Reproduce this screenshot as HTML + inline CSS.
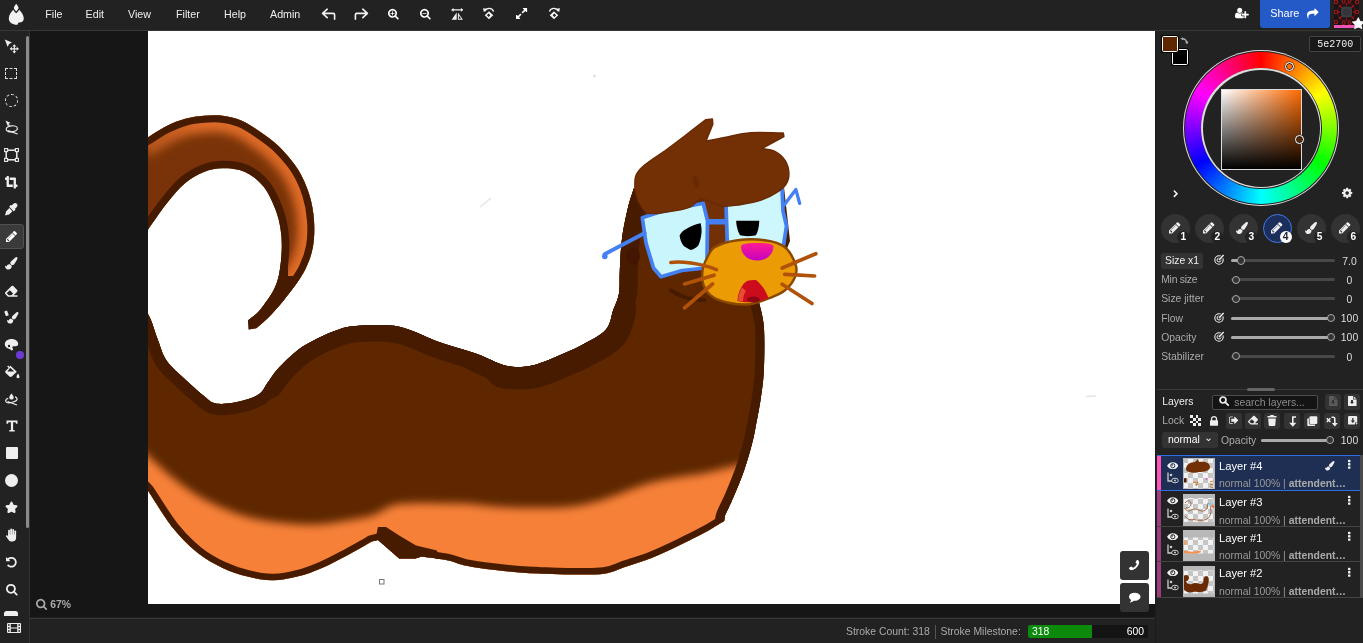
<!DOCTYPE html><html><head><meta charset="utf-8"><title>Magma</title><style>
*{box-sizing:border-box;margin:0;padding:0}
html,body{width:1363px;height:643px;overflow:hidden;background:#222;font-family:"Liberation Sans",sans-serif;font-size:10.4px;color:#aaa}
.abs{position:absolute}
#top,#tools,#status,#right,#work{will-change:transform}
#top{position:absolute;left:0;top:0;width:1363px;height:31px;background:#222;border-bottom:1px solid #383838}
.menu{position:absolute;top:8px;font-size:10.7px;color:#eee;line-height:13px;white-space:nowrap}
#tools{position:absolute;left:0;top:31px;width:30px;height:584.500px;background:#222;border-right:1px solid #333;overflow:hidden}
#work{position:absolute;left:30px;top:31px;width:1125px;height:586px;background:#161616;overflow:hidden}
#status{position:absolute;left:0;top:617px;width:1155px;height:26px;background:#222}
#right{position:absolute;left:1155px;top:31px;width:208px;height:612px;background:#222;border-left:1px solid #1b1b1b}
.t{position:absolute;white-space:nowrap;line-height:12px}
.btn{position:absolute;background:#333;border-radius:2.5px}
.track{position:absolute;height:3px;border-radius:2px;background:#484848}
.fill{position:absolute;height:3px;border-radius:2px;background:#aaa}
.thumb{position:absolute;width:8.400px;height:8.400px;border-radius:50%;background:#333;border:1px solid #aaa}
.val{position:absolute;width:30px;text-align:center;color:#ddd;font-size:10.4px;line-height:12px}
.lrow{position:absolute;left:1157px;width:203px;height:36px;border-bottom:1.600px solid #444}
.strip{position:absolute;left:0;top:0;width:4px;height:100%;background:#9c3d7d}
.thumbn{position:absolute;left:26px;top:3px;width:31.5px;height:31.5px;background:#b8b8b8;overflow:hidden}
.lname{position:absolute;left:62px;top:5px;font-size:11.2px;color:#fff;line-height:13px;white-space:nowrap}
.lsub{position:absolute;left:62px;top:22.5px;font-size:10.4px;color:#999;line-height:12px;white-space:nowrap}
.lsub b{color:#aaa}
</style></head><body>
<div id="work">
<div class="abs" style="left:118px;top:0;width:1007px;height:573px;background:#fff;overflow:hidden">
<svg style="position:absolute;left:0;top:0;width:1007px;height:574px" viewBox="148 30 1007 574">
<defs>
<filter id="b4" x="-20%" y="-20%" width="140%" height="140%"><feGaussianBlur stdDeviation="4.5"/></filter>
<filter id="b6" x="-30%" y="-30%" width="160%" height="160%"><feGaussianBlur stdDeviation="5"/></filter>
<filter id="b1" x="-20%" y="-20%" width="140%" height="140%"><feGaussianBlur stdDeviation="0.7"/></filter>
<clipPath id="cbody"><path d="M130.0 290.0C133.0 293.8 143.4 305.1 148.0 313.0C152.6 320.9 154.2 329.5 157.3 337.3C160.4 345.1 162.0 352.9 166.7 359.7C171.4 366.5 179.1 372.5 185.3 378.4C191.5 384.3 199.3 391.1 204.0 395.0C208.7 398.9 209.6 400.4 213.3 401.7C217.0 403.0 221.1 403.1 226.4 402.6C231.7 402.1 239.4 400.6 245.0 398.9C250.6 397.2 256.3 395.2 260.0 392.4C263.7 389.6 264.3 386.2 267.4 382.0C270.5 377.8 273.6 372.4 278.6 367.0C283.6 361.6 291.1 354.2 297.3 349.4C303.5 344.6 309.7 341.4 315.9 338.2C322.1 334.9 328.4 332.1 334.6 329.9C340.8 327.7 344.3 326.1 353.2 325.2C362.1 324.3 378.5 323.7 388.0 324.3C397.5 324.9 401.5 326.2 410.0 329.0C418.5 331.8 427.8 337.0 439.0 341.0C450.2 345.0 465.8 349.1 477.0 353.0C488.2 356.9 497.0 362.8 506.0 364.7C515.0 366.6 522.5 366.2 531.0 364.7C539.5 363.1 548.3 358.8 556.8 355.4C565.3 351.9 573.8 348.4 582.0 344.0C590.2 339.6 600.6 334.6 605.8 328.8C611.0 323.0 611.1 315.1 613.3 309.0C615.5 302.9 617.9 298.9 619.0 292.4C620.1 285.9 619.3 279.1 619.8 270.0C620.3 260.9 620.6 248.3 622.0 237.7C623.4 227.1 626.0 215.0 628.0 206.6C630.0 198.2 633.0 190.3 634.0 187.0L784 186 L790 240 L770 290L758.9 300.8C759.7 305.0 763.1 314.8 763.9 326.0C764.7 337.2 764.4 356.3 763.9 368.0C763.4 379.7 762.4 386.2 761.0 396.0C759.6 405.8 757.0 418.9 755.5 426.7C754.0 434.5 753.9 435.8 752.0 443.0C750.1 450.2 747.1 460.9 744.0 469.7C740.9 478.5 736.7 488.5 733.5 496.0C730.3 503.5 726.4 511.5 725.0 514.6L724.2 519.9C720.9 521.9 712.1 527.6 704.4 531.8C696.7 536.0 686.8 540.8 678.0 545.0C669.2 549.2 660.3 553.5 651.5 557.0C642.7 560.5 632.9 563.4 625.0 566.0C617.1 568.6 612.8 571.5 604.0 572.8C595.2 574.0 581.9 573.5 572.2 573.5C562.5 573.5 554.6 573.1 545.8 572.8C537.0 572.5 528.1 572.2 519.3 571.5C510.5 570.8 501.7 569.9 492.9 568.8C484.1 567.7 473.9 566.4 466.4 564.8C458.9 563.2 455.5 560.9 448.0 559.4C440.5 557.9 426.0 556.1 421.6 555.5L415.4 557.5L399.2 557.5L378 539L371.9 540.5C367.8 542.8 355.3 550.0 347.0 554.4C338.7 558.8 330.3 563.4 322.0 566.9C313.7 570.4 305.6 573.5 297.3 575.6C289.0 577.7 280.7 579.3 272.4 579.3C264.1 579.3 255.8 577.7 247.5 575.6C239.2 573.5 230.9 570.8 222.6 566.9C214.3 563.0 206.1 558.6 197.8 552.0C189.5 545.4 181.2 537.4 172.9 527.0C164.6 516.6 152.2 496.0 148.0 489.8L130 470Z"/></clipPath>
<clipPath id="ctail"><path d="M140.0 141.0C141.3 140.2 143.6 139.0 148.0 136.3C152.4 133.6 160.5 128.1 166.7 125.0C172.9 121.9 179.1 119.4 185.3 117.7C191.5 116.0 197.8 115.2 204.0 114.7C210.2 114.2 216.4 113.9 222.6 114.7C228.8 115.5 235.1 116.8 241.3 119.5C247.5 122.2 253.7 126.3 260.0 130.7C266.3 135.0 272.7 139.3 279.0 145.6C285.3 151.9 293.0 160.6 298.0 168.5C303.0 176.4 306.5 184.8 309.2 193.3C311.9 201.8 313.4 210.7 314.0 219.4C314.6 228.1 314.4 237.4 313.0 245.5C311.6 253.6 309.2 260.4 305.5 267.9C301.8 275.4 296.2 283.1 290.5 290.6C284.8 298.2 277.2 307.1 271.5 313.2C265.8 319.3 258.8 324.9 256.2 327.2L248.7 328.400L248.0 319.4C250.0 317.7 255.5 314.5 260.0 309.0C264.5 303.5 271.5 294.1 274.9 286.6C278.3 279.1 279.4 272.3 280.5 264.2C281.6 256.1 282.2 246.7 281.6 238.0C281.0 229.3 279.7 220.7 276.7 212.0C273.7 203.3 269.0 192.7 263.7 185.8C258.4 179.0 251.8 174.0 245.0 170.9C238.2 167.8 229.4 167.2 222.6 167.2C215.8 167.2 210.2 168.4 204.0 170.9C197.8 173.4 191.5 176.7 185.3 182.0C179.1 187.3 172.9 194.8 166.7 202.6C160.5 210.4 152.4 222.5 148.0 228.7C143.6 234.9 141.3 238.1 140.0 240.0Z"/></clipPath>
<linearGradient id="tg" gradientUnits="userSpaceOnUse" x1="148" y1="0" x2="320" y2="0"><stop offset="0" stop-color="#b3541b"/><stop offset=".3" stop-color="#dc6926"/><stop offset="1" stop-color="#e06c28"/></linearGradient>
<linearGradient id="nose" x1="0" y1="0" x2="0" y2="1"><stop offset="0" stop-color="#ff1c90"/><stop offset="1" stop-color="#c400c4"/></linearGradient>
</defs>
<g clip-path="url(#ctail)">
<rect x="140" y="100" width="200" height="240" fill="#7a3308"/>
<path d="M140.0 141.0C141.3 140.2 143.6 139.0 148.0 136.3C152.4 133.6 160.5 128.1 166.7 125.0C172.9 121.9 179.1 119.4 185.3 117.7C191.5 116.0 197.8 115.2 204.0 114.7C210.2 114.2 216.4 113.9 222.6 114.7C228.8 115.5 235.1 116.8 241.3 119.5C247.5 122.2 253.7 126.3 260.0 130.7C266.3 135.0 272.7 139.3 279.0 145.6C285.3 151.9 293.0 160.6 298.0 168.5C303.0 176.4 306.5 184.8 309.2 193.3C311.9 201.8 313.4 210.7 314.0 219.4C314.6 228.1 314.4 237.4 313.0 245.5C311.6 253.6 309.2 260.4 305.5 267.9C301.8 275.4 296.2 283.1 290.5 290.6C284.8 298.2 277.2 307.1 271.5 313.2C265.8 319.3 258.8 324.9 256.2 327.2" fill="none" stroke="url(#tg)" stroke-width="34" filter="url(#b6)"/>
<path d="M248.0 319.4C250.0 317.7 255.5 314.5 260.0 309.0C264.5 303.5 271.5 294.1 274.9 286.6C278.3 279.1 279.4 272.3 280.5 264.2C281.6 256.1 282.2 246.7 281.6 238.0C281.0 229.3 279.7 220.7 276.7 212.0C273.7 203.3 269.0 192.7 263.7 185.8C258.4 179.0 251.8 174.0 245.0 170.9C238.2 167.8 229.4 167.2 222.6 167.2C215.8 167.2 210.2 168.4 204.0 170.9C197.8 173.4 191.5 176.7 185.3 182.0C179.1 187.3 172.9 194.8 166.7 202.6C160.5 210.4 152.4 222.5 148.0 228.7C143.6 234.9 141.3 238.1 140.0 240.0" fill="none" stroke="#471b00" stroke-width="15"/>
<path d="M140.0 141.0C141.3 140.2 143.6 139.0 148.0 136.3C152.4 133.6 160.5 128.1 166.7 125.0C172.9 121.9 179.1 119.4 185.3 117.7C191.5 116.0 197.8 115.2 204.0 114.7C210.2 114.2 216.4 113.9 222.6 114.7C228.8 115.5 235.1 116.8 241.3 119.5C247.5 122.2 253.7 126.3 260.0 130.7C266.3 135.0 272.7 139.3 279.0 145.6C285.3 151.9 293.0 160.6 298.0 168.5C303.0 176.4 306.5 184.8 309.2 193.3C311.9 201.8 313.4 210.7 314.0 219.4C314.6 228.1 314.4 237.4 313.0 245.5C311.6 253.6 309.2 260.4 305.5 267.9C301.8 275.4 296.2 283.1 290.5 290.6C284.8 298.2 277.2 307.1 271.5 313.2C265.8 319.3 258.8 324.9 256.2 327.2" fill="none" stroke="#471b00" stroke-width="14"/>
<path d="M270 236 L288 240 L288 275 L300 275 L300 340 L230 340 L230 236 Z" fill="#471b00"/>
</g>
<g clip-path="url(#cbody)">
<rect x="130" y="180" width="650" height="420" fill="#5e2700"/>
<path d="M130.0 440.0C133.0 442.5 140.8 448.8 148.0 455.0C155.2 461.2 164.6 470.4 172.9 477.0C181.2 483.6 189.5 489.7 197.8 494.7C206.1 499.7 214.3 503.5 222.6 507.0C230.9 510.5 239.2 513.6 247.5 515.9C255.8 518.2 264.1 519.6 272.4 520.8C280.7 522.0 289.0 522.9 297.3 523.3C305.6 523.7 313.7 523.9 322.0 523.3C330.3 522.7 338.7 521.0 347.0 519.6C355.3 518.2 365.3 516.7 371.9 514.6C378.5 512.5 382.6 508.9 386.8 507.0C391.0 505.1 391.0 504.2 396.8 503.4C402.6 502.6 413.6 502.1 421.6 502.0C429.6 501.9 437.5 502.4 445.0 502.5C452.5 502.6 458.4 502.2 466.4 502.7C474.4 503.2 484.1 504.7 492.9 505.4C501.7 506.1 510.5 506.5 519.3 506.7C528.1 506.9 537.0 506.9 545.8 506.7C554.6 506.5 563.4 506.5 572.2 505.4C581.0 504.3 589.9 502.4 598.7 500.0C607.5 497.6 616.2 493.9 625.0 490.8C633.8 487.7 642.7 484.0 651.5 481.6C660.3 479.2 669.2 477.9 678.0 476.3C686.8 474.8 695.6 474.1 704.4 472.3C713.2 470.5 721.6 467.8 730.9 465.7C740.2 463.6 755.1 460.9 760.0 460.0L760 600L130 600Z" fill="#f68038" filter="url(#b4)"/>
<path d="M130.0 290.0C133.0 293.8 143.4 305.1 148.0 313.0C152.6 320.9 154.2 329.5 157.3 337.3C160.4 345.1 162.0 352.9 166.7 359.7C171.4 366.5 179.1 372.5 185.3 378.4C191.5 384.3 199.3 391.1 204.0 395.0C208.7 398.9 209.6 400.4 213.3 401.7C217.0 403.0 221.1 403.1 226.4 402.6C231.7 402.1 239.4 400.6 245.0 398.9C250.6 397.2 256.3 395.2 260.0 392.4C263.7 389.6 264.3 386.2 267.4 382.0C270.5 377.8 273.6 372.4 278.6 367.0C283.6 361.6 291.1 354.2 297.3 349.4C303.5 344.6 309.7 341.4 315.9 338.2C322.1 334.9 328.4 332.1 334.6 329.9C340.8 327.7 344.3 326.1 353.2 325.2C362.1 324.3 378.5 323.7 388.0 324.3C397.5 324.9 401.5 326.2 410.0 329.0C418.5 331.8 427.8 337.0 439.0 341.0C450.2 345.0 465.8 349.1 477.0 353.0C488.2 356.9 497.0 362.8 506.0 364.7C515.0 366.6 522.5 366.2 531.0 364.7C539.5 363.1 548.3 358.8 556.8 355.4C565.3 351.9 573.8 348.4 582.0 344.0C590.2 339.6 600.6 334.6 605.8 328.8C611.0 323.0 611.1 315.1 613.3 309.0C615.5 302.9 617.9 298.9 619.0 292.4C620.1 285.9 619.3 279.1 619.8 270.0C620.3 260.9 620.6 248.3 622.0 237.7C623.4 227.1 626.0 215.0 628.0 206.6C630.0 198.2 633.0 190.3 634.0 187.0L784 186 L790 240 L770 290L758.9 300.8C759.7 305.0 763.1 314.8 763.9 326.0C764.7 337.2 764.4 356.3 763.9 368.0C763.4 379.7 762.4 386.2 761.0 396.0C759.6 405.8 757.0 418.9 755.5 426.7C754.0 434.5 753.9 435.8 752.0 443.0C750.1 450.2 747.1 460.9 744.0 469.7C740.9 478.5 736.7 488.5 733.5 496.0C730.3 503.5 726.4 511.5 725.0 514.6L724.2 519.9C720.9 521.9 712.1 527.6 704.4 531.8C696.7 536.0 686.8 540.8 678.0 545.0C669.2 549.2 660.3 553.5 651.5 557.0C642.7 560.5 632.9 563.4 625.0 566.0C617.1 568.6 612.8 571.5 604.0 572.8C595.2 574.0 581.9 573.5 572.2 573.5C562.5 573.5 554.6 573.1 545.8 572.8C537.0 572.5 528.1 572.2 519.3 571.5C510.5 570.8 501.7 569.9 492.9 568.8C484.1 567.7 473.9 566.4 466.4 564.8C458.9 563.2 455.5 560.9 448.0 559.4C440.5 557.9 426.0 556.1 421.6 555.5L415.4 557.5L399.2 557.5L378 539L371.9 540.5C367.8 542.8 355.3 550.0 347.0 554.4C338.7 558.8 330.3 563.4 322.0 566.9C313.7 570.4 305.6 573.5 297.3 575.6C289.0 577.7 280.7 579.3 272.4 579.3C264.1 579.3 255.8 577.7 247.5 575.6C239.2 573.5 230.9 570.8 222.6 566.9C214.3 563.0 206.1 558.6 197.8 552.0C189.5 545.4 181.2 537.4 172.9 527.0C164.6 516.6 152.2 496.0 148.0 489.8L130 470Z" fill="none" stroke="#471b00" stroke-width="13" stroke-linejoin="round"/>
<path d="M148.0 313.0C149.6 317.1 154.2 329.5 157.3 337.3C160.4 345.1 162.0 352.9 166.7 359.7C171.4 366.5 179.1 372.5 185.3 378.4C191.5 384.3 199.3 391.1 204.0 395.0C208.7 398.9 209.6 400.4 213.3 401.7C217.0 403.0 221.1 403.1 226.4 402.6C231.7 402.1 239.4 400.6 245.0 398.9C250.6 397.2 256.3 395.2 260.0 392.4C263.7 389.6 264.3 386.2 267.4 382.0C270.5 377.8 273.6 372.4 278.6 367.0C283.6 361.6 291.1 354.2 297.3 349.4C303.5 344.6 309.7 341.4 315.9 338.2C322.1 334.9 328.4 332.1 334.6 329.9C340.8 327.7 344.3 326.1 353.2 325.2C362.1 324.3 378.5 323.7 388.0 324.3C397.5 324.9 401.5 326.2 410.0 329.0C418.5 331.8 427.8 337.0 439.0 341.0C450.2 345.0 465.8 349.1 477.0 353.0C488.2 356.9 497.0 362.8 506.0 364.7C515.0 366.6 522.5 366.2 531.0 364.7C539.5 363.1 548.3 358.8 556.8 355.4C565.3 351.9 573.8 348.4 582.0 344.0C590.2 339.6 600.6 334.6 605.8 328.8C611.0 323.0 611.1 315.1 613.3 309.0C615.5 302.9 617.9 298.9 619.0 292.4C620.1 285.9 619.3 279.1 619.8 270.0C620.3 260.9 620.6 248.3 622.0 237.7C623.4 227.1 626.0 215.0 628.0 206.6C630.0 198.2 633.0 190.3 634.0 187.0" fill="none" stroke="#471b00" stroke-width="23" stroke-linejoin="round"/>
<path d="M267.4 382.0C269.3 379.5 273.6 372.4 278.6 367.0C283.6 361.6 291.1 354.2 297.3 349.4C303.5 344.6 309.7 341.4 315.9 338.2C322.1 334.9 328.4 332.1 334.6 329.9C340.8 327.7 344.3 326.1 353.2 325.2C362.1 324.3 378.5 323.7 388.0 324.3C397.5 324.9 401.5 326.2 410.0 329.0C418.5 331.8 427.8 337.0 439.0 341.0C450.2 345.0 470.7 351.0 477.0 353.0" fill="none" stroke="#471b00" stroke-width="33" stroke-linecap="round"/>
<path d="M477.0 353.0C481.8 354.9 497.0 362.8 506.0 364.7C515.0 366.6 522.5 366.2 531.0 364.7C539.5 363.1 548.3 358.8 556.8 355.4C565.3 351.9 573.8 348.4 582.0 344.0C590.2 339.6 600.6 334.6 605.8 328.8C611.0 323.0 611.1 315.1 613.3 309.0C615.5 302.9 617.9 298.9 619.0 292.4C620.1 285.9 619.3 279.1 619.8 270.0C620.3 260.9 620.6 248.3 622.0 237.7C623.4 227.1 626.0 215.0 628.0 206.6C630.0 198.2 633.0 190.3 634.0 187.0" fill="none" stroke="#471b00" stroke-width="36" stroke-linecap="round"/>
<path d="M506.0 364.7C510.2 364.7 522.5 366.2 531.0 364.7C539.5 363.1 548.3 358.8 556.8 355.4C565.3 351.9 573.8 348.4 582.0 344.0C590.2 339.6 600.6 334.6 605.8 328.8C611.0 323.0 612.0 312.3 613.3 309.0" fill="none" stroke="#471b00" stroke-width="46" stroke-linecap="round"/>
<ellipse cx="633" cy="255" rx="7" ry="9" fill="#421800" filter="url(#b1)"/>
<path d="M757.0 296.0C757.3 296.8 757.8 295.8 758.9 300.8C760.0 305.8 763.1 314.8 763.9 326.0C764.7 337.2 764.4 356.3 763.9 368.0C763.4 379.7 762.4 386.2 761.0 396.0C759.6 405.8 757.0 418.9 755.5 426.7C754.0 434.5 753.9 435.8 752.0 443.0C750.1 450.2 747.1 460.9 744.0 469.7C740.9 478.5 736.7 488.5 733.5 496.0C730.3 503.5 726.5 510.6 725.0 514.6C723.5 518.6 724.3 519.0 724.2 519.9" fill="none" stroke="#471b00" stroke-width="18"/>
<path d="M378 526 L386 526 L400 535 L416 544.5 L437 549.5 L440 562 L399 562 L375 540 Z" fill="#471b00"/>
</g>
<path d="M704 196 L728 200 L728 252 L704 262 Z" fill="#743005"/>
<path d="M642.3 216.7 L659.7 211 L703.2 202.3 L707.5 219.7 L707 257 L705.7 267 L682 269.5 L661 275.7 L653.5 267 L646 242 Z" fill="#c8f6fc" stroke="#4480f2" stroke-width="3.7" stroke-linejoin="round"/>
<path d="M726 203 L782 186 L783 210 L786.5 225 L783.4 245 L727.4 245 Z" fill="#cdf7fc" stroke="#4480f2" stroke-width="3.7" stroke-linejoin="round"/>
<path d="M706 218 L727 218 L727 223.5 L706 223.5 Z" fill="#4480f2"/>
<path d="M644.8 232 L604.5 253.3" fill="none" stroke="#4480f2" stroke-width="3.8" stroke-linecap="round"/><circle cx="604.8" cy="255.5" r="2.8" fill="#4480f2"/>
<path d="M783.4 205 L795.9 188.6 L799.6 202.3" fill="none" stroke="#4480f2" stroke-width="3.3" stroke-linecap="round" stroke-linejoin="round"/>
<path d="M634.9 187.7C635.1 185.5 634.3 178.6 635.9 174.7C637.5 170.8 639.2 168.8 644.3 164.4C649.4 160.0 659.9 153.5 666.7 148.5C673.5 143.5 678.8 139.5 685.3 134.5C691.8 129.5 702.5 121.3 705.9 118.7L712.4 118.1L712.8 123.3L705.9 140.1L705.9 140.1C709.0 139.5 717.0 137.8 724.5 136.4C732.0 135.0 740.8 132.4 750.6 131.7C760.4 131.0 777.8 132.0 783.3 132.1L783.9 135.5L761.8 147.6L761.8 147.6C764.0 148.1 771.0 148.4 774.9 150.4C778.8 152.4 782.9 156.0 785.2 159.7C787.5 163.4 788.8 168.9 788.9 172.8C789.0 176.7 788.1 179.9 786.1 183.0C784.1 186.1 780.8 188.8 776.8 191.5C772.8 194.2 767.7 196.9 761.8 198.9C755.9 200.9 747.8 202.5 741.3 203.6C734.8 204.7 725.7 205.2 722.6 205.5L700.2 197L700.2 197.0C698.3 198.6 694.6 204.1 689.0 206.4C683.4 208.7 673.5 210.1 666.7 211.0C659.9 211.9 652.7 213.7 648.0 212.0C643.3 210.3 640.9 204.9 638.7 200.8C636.5 196.8 635.5 189.9 634.9 187.7Z" fill="#743005" stroke="#6a2a03" stroke-width="1.5" stroke-linejoin="round"/>
<ellipse cx="696" cy="181" rx="3" ry="6" fill="#692903" transform="rotate(-15 696 181)"/>
<path d="M700.7 222.2 C701.5 226 701.8 229 701.5 232 C701 237 700 241 698.3 244.6 C696 247 693 249 690.8 249 C688 248 685 246 683.3 244.6 C681 241 680 238 679.6 234.6 C681 231 684 229 687 227.4 C691 225 696 223 700.7 222.2 Z" fill="#000"/>
<path d="M736.1 219.8 L759.3 219.8 C759 226 758 231 756 234 C754 235.5 742 235.5 739.9 234 C738 231 736.5 226 736.1 219.8 Z" fill="#000"/>
<path d="M670.9 289.4 C680 296 692 299 704.5 299.3" fill="none" stroke="#471b00" stroke-width="4" stroke-linecap="round"/>
<path d="M707.0 257.0C709.1 253.1 709.9 249.0 715.0 246.0C720.1 243.0 729.1 240.3 737.4 239.2C745.7 238.1 756.9 238.1 764.8 239.2C772.7 240.3 779.5 241.8 784.7 246.0C789.9 250.2 794.2 259.4 795.9 264.6C797.5 269.8 796.5 272.9 794.6 277.0C792.7 281.1 788.9 286.2 784.7 289.5C780.6 292.8 775.5 294.7 769.7 297.0C763.9 299.3 756.4 302.4 749.8 303.2C743.2 304.0 736.1 303.2 729.9 302.0C723.7 300.8 716.9 298.6 712.5 295.7C708.1 292.8 705.4 288.9 703.7 284.5C702.0 280.1 702.0 274.2 702.5 269.6C703.0 265.0 704.9 260.9 707.0 257.0Z" fill="#eb9c05" stroke="#8a4800" stroke-width="2.4"/>
<path d="M741 246 C741 243 745 242 757 242 C769 242 773.5 243 773.5 246 C773 254 766 259.6 757.3 259.6 C748 259.6 741.5 254 741 246 Z" fill="url(#nose)"/>
<path d="M737.4 300 C738 294 739 290 741 287 C743 283 746 280 748.6 279.5 C751 278.8 754 278.8 756 279 C759 281 761 284 763.5 287 C765.5 290 767 293 768.5 297 C760 301 748 302.5 737.4 300 Z" fill="#cc0c1c"/>
<path d="M738 299.8 C738.5 294 740 290 742 286.5 L746 290 C744 293 743 296 743 300.5 Z" fill="#e8603a" opacity=".8"/>
<ellipse cx="753.5" cy="298.5" rx="6.5" ry="3" fill="#8c0618"/>
<g fill="none" stroke="#b0520a" stroke-width="3.7" stroke-linecap="round"><path d="M670.9 261.5 C680 260 700 262 716.5 268.6"/><path d="M684.6 283 L714 274.2"/><path d="M684.6 306.8 L712.5 283"/><path d="M782.2 267 L815.8 252.7"/><path d="M784.7 273.3 L814.6 275"/><path d="M782.2 283.3 L812 302.5"/></g>
<rect x="379.5" y="578.5" width="4.5" height="4.5" fill="none" stroke="#777" stroke-width="1"/>
<path d="M480 206 L491 197" stroke="#e8e4e0" stroke-width="1.5"/><path d="M1086 395.5 L1096 395" stroke="#e4e4e4" stroke-width="1.5"/><circle cx="594.5" cy="75" r="1.5" fill="#e6e0dc"/>
</svg>
</div>
<svg style="position:absolute;left:6.13px;top:566.60px;width:11.14px;height:12.00px;fill:#aaa;overflow:visible;" viewBox="0 -1536 1664 1792"><path transform="scale(1,-1)" d="M1152 704q0 185 -131.5 316.5t-316.5 131.5t-316.5 -131.5t-131.5 -316.5t131.5 -316.5t316.5 -131.5t316.5 131.5t131.5 316.5zM1664 -128q0 -52 -38 -90t-90 -38q-54 0 -90 38l-343 342q-179 -124 -399 -124q-143 0 -273.5 55.5t-225 150t-150 225t-55.5 273.5 t55.5 273.5t150 225t225 150t273.5 55.5t273.5 -55.5t225 -150t150 -225t55.5 -273.5q0 -220 -124 -399l343 -343q37 -37 37 -90z"/></svg>
<div class="t" style="left:20.200px;top:568px;color:#aaa;font-size:10.400px;font-weight:bold">67%</div>
<div class="btn" style="left:1090px;top:520px;width:29px;height:29px;border-radius:3px"></div>
<svg style="position:absolute;left:1099.39px;top:528.00px;width:10.21px;height:13.00px;fill:#fff;overflow:visible;" viewBox="0 -1536 1408 1792"><path transform="translate(1408,0) scale(-1,-1)" d="M1408 296q0 -27 -10 -70.5t-21 -68.5q-21 -50 -122 -106q-94 -51 -186 -51q-27 0 -53 3.5t-57.5 12.5t-47 14.5t-55.5 20.5t-49 18q-98 35 -175 83q-127 79 -264 216t-216 264q-48 77 -83 175q-3 9 -18 49t-20.5 55.5t-14.5 47t-12.5 57.5t-3.5 53q0 92 51 186 q56 101 106 122q25 11 68.5 21t70.5 10q14 0 21 -3q18 -6 53 -76q11 -19 30 -54t35 -63.5t31 -53.5q3 -4 17.5 -25t21.5 -35.5t7 -28.5q0 -20 -28.5 -50t-62 -55t-62 -53t-28.5 -46q0 -9 5 -22.5t8.5 -20.5t14 -24t11.5 -19q76 -137 174 -235t235 -174q2 -1 19 -11.5t24 -14 t20.5 -8.5t22.5 -5q18 0 46 28.5t53 62t55 62t50 28.5q14 0 28.5 -7t35.5 -21.5t25 -17.5q25 -15 53.5 -31t63.5 -35t54 -30q70 -35 76 -53q3 -7 3 -21z"/></svg>
<div class="btn" style="left:1090px;top:552px;width:29px;height:29px;border-radius:3px"></div>
<svg style="position:absolute;left:1098.75px;top:559.75px;width:11.50px;height:11.50px;fill:#fff;overflow:visible;" viewBox="0 -1536 1792 1792"><path transform="scale(1,-1)" d="M1792 640q0 -174 -120 -321.5t-326 -233t-450 -85.5q-70 0 -145 8q-198 -175 -460 -242q-49 -14 -114 -22q-17 -2 -30.5 9t-17.5 29v1q-3 4 -0.5 12t2 10t4.5 9.5l6 9t7 8.5t8 9q7 8 31 34.5t34.5 38t31 39.5t32.5 51t27 59t26 76q-157 89 -247.5 220t-90.5 281 q0 130 71 248.5t191 204.5t286 136.5t348 50.5q244 0 450 -85.5t326 -233t120 -321.5z"/></svg>
</div>
<div id="top">
<svg class="abs" style="left:8px;top:3px;width:17px;height:23px" viewBox="0 0 17 23"><path fill="#f2f2f2" d="M8.2 0.8 C9.2 2.2 10.2 3.6 10.6 4.9 C10.2 6.3 9.2 7.3 8.2 8.3 C7.2 7.3 6.2 6.3 5.8 4.9 C6.2 3.6 7.2 2.2 8.2 0.8 Z M5.2 6.8 C6 8.2 7 9.3 8.2 10.2 C9.4 9.3 10.4 8.2 11.2 6.8 C13.6 9.2 15.8 12.4 15.8 15.6 C15.8 18.4 13.8 19.6 11.6 19.6 C10.4 19.6 9.6 20.2 10 21.6 C5.8 22.2 0.8 19.8 0.8 15.4 C0.8 12.2 3 9.2 5.2 6.8 Z"/></svg>
<div class="menu" style="left:45.3px">File</div>
<div class="menu" style="left:85.6px">Edit</div>
<div class="menu" style="left:128px">View</div>
<div class="menu" style="left:176px">Filter</div>
<div class="menu" style="left:224px">Help</div>
<div class="menu" style="left:270px">Admin</div>
<svg class="abs" style="left:321px;top:6.5px;width:16px;height:14px" viewBox="0 0 16 14"><path fill="none" stroke="#f2f2f2" stroke-width="1.6" stroke-linecap="round" stroke-linejoin="round" d="M6.200 2.200L1.600 6.400l4.600 4.200M1.800 6.400h10.400q1.400 0 1.400 1.400v4.400"/></svg>
<svg class="abs" style="left:353px;top:6.5px;width:16px;height:14px" viewBox="0 0 16 14"><path fill="none" stroke="#f2f2f2" stroke-width="1.6" stroke-linecap="round" stroke-linejoin="round" d="M9.800 2.200l4.600 4.200-4.600 4.200M14.200 6.400H3.800q-1.400 0-1.400 1.400v4.400"/></svg>
<svg style="position:absolute;left:387.66px;top:7.75px;width:10.68px;height:11.50px;fill:#fff;overflow:visible;" viewBox="0 -1536 1664 1792"><path transform="scale(1,-1)" d="M1024 736v-64q0 -13 -9.5 -22.5t-22.5 -9.5h-224v-224q0 -13 -9.5 -22.5t-22.5 -9.5h-64q-13 0 -22.5 9.5t-9.5 22.5v224h-224q-13 0 -22.5 9.5t-9.5 22.5v64q0 13 9.5 22.5t22.5 9.5h224v224q0 13 9.5 22.5t22.5 9.5h64q13 0 22.5 -9.5t9.5 -22.5v-224h224 q13 0 22.5 -9.5t9.5 -22.5zM1152 704q0 185 -131.5 316.5t-316.5 131.5t-316.5 -131.5t-131.5 -316.5t131.5 -316.5t316.5 -131.5t316.5 131.5t131.5 316.5zM1664 -128q0 -53 -37.5 -90.5t-90.5 -37.5q-54 0 -90 38l-343 342q-179 -124 -399 -124q-143 0 -273.5 55.5 t-225 150t-150 225t-55.5 273.5t55.5 273.5t150 225t225 150t273.5 55.5t273.5 -55.5t225 -150t150 -225t55.5 -273.5q0 -220 -124 -399l343 -343q37 -37 37 -90z"/></svg>
<svg style="position:absolute;left:419.66px;top:7.75px;width:10.68px;height:11.50px;fill:#fff;overflow:visible;" viewBox="0 -1536 1664 1792"><path transform="scale(1,-1)" d="M1024 736v-64q0 -13 -9.5 -22.5t-22.5 -9.5h-576q-13 0 -22.5 9.5t-9.5 22.5v64q0 13 9.5 22.5t22.5 9.5h576q13 0 22.5 -9.5t9.5 -22.5zM1152 704q0 185 -131.5 316.5t-316.5 131.5t-316.5 -131.5t-131.5 -316.5t131.5 -316.5t316.5 -131.5t316.5 131.5t131.5 316.5z M1664 -128q0 -53 -37.5 -90.5t-90.5 -37.5q-54 0 -90 38l-343 342q-179 -124 -399 -124q-143 0 -273.5 55.5t-225 150t-150 225t-55.5 273.5t55.5 273.5t150 225t225 150t273.5 55.5t273.5 -55.5t225 -150t150 -225t55.5 -273.5q0 -220 -124 -399l343 -343q37 -37 37 -90z "/></svg>
<svg style="position:absolute;left:515.63px;top:7.10px;width:11.14px;height:13.00px;fill:#fff;overflow:visible;" viewBox="0 -1536 1536 1792"><path transform="scale(1,-1)" d="M755 480q0 -13 -10 -23l-332 -332l144 -144q19 -19 19 -45t-19 -45t-45 -19h-448q-26 0 -45 19t-19 45v448q0 26 19 45t45 19t45 -19l144 -144l332 332q10 10 23 10t23 -10l114 -114q10 -10 10 -23zM1536 1344v-448q0 -26 -19 -45t-45 -19t-45 19l-144 144l-332 -332 q-10 -10 -23 -10t-23 10l-114 114q-10 10 -10 23t10 23l332 332l-144 144q-19 19 -19 45t19 45t45 19h448q26 0 45 -19t19 -45z"/></svg>
<svg class="abs" style="left:450.5px;top:7.5px;width:12.5px;height:12px" viewBox="0 0 12.5 12"><path fill="#f2f2f2" d="M2.600 0L0 1.900l2.600 1.900V2.500h7.300v1.300l2.600-1.900L9.900 0v1.300H2.600zM5.700 4.600V11.800H.6zM6.900 4.600l5 7.200h-5zM7.900 7.600v3.200h2.200z" fill-rule="evenodd"/></svg>
<svg class="abs" style="left:483.3px;top:7.300px;width:12px;height:12.500px" viewBox="0 0 12 12.5"><g><path fill="none" stroke="#f2f2f2" stroke-width="1.300" d="M1.800 4.300A4.700 4.700 0 0 1 10.600 4.600"/><path fill="#f2f2f2" d="M0 1.300l3.700 .5L.9 5.300z"/><path fill="#f2f2f2" fill-rule="evenodd" d="M6 4.300l4.300 4L6 12.300 1.700 8.300zM5.600 6.600L3.900 8.300l1.700 1.600 1.700-1.600z"/></g></svg>
<svg class="abs" style="left:547.7px;top:7.300px;width:12px;height:12.500px" viewBox="0 0 12 12.5"><g transform="translate(12,0) scale(-1,1)"><path fill="none" stroke="#f2f2f2" stroke-width="1.300" d="M1.800 4.300A4.700 4.700 0 0 1 10.600 4.600"/><path fill="#f2f2f2" d="M0 1.300l3.700 .5L.9 5.300z"/><path fill="#f2f2f2" fill-rule="evenodd" d="M6 4.300l4.300 4L6 12.300 1.700 8.300zM5.600 6.600L3.900 8.300l1.700 1.600 1.700-1.600z"/></g></svg>
<svg style="position:absolute;left:1234.94px;top:7.30px;width:13.71px;height:12.00px;fill:#fff;overflow:visible;" viewBox="0 -1536 2048 1792"><path transform="scale(1,-1)" d="M704 640q-159 0 -271.5 112.5t-112.5 271.5t112.5 271.5t271.5 112.5t271.5 -112.5t112.5 -271.5t-112.5 -271.5t-271.5 -112.5zM1664 512h352q13 0 22.5 -9.5t9.5 -22.5v-192q0 -13 -9.5 -22.5t-22.5 -9.5h-352v-352q0 -13 -9.5 -22.5t-22.5 -9.5h-192q-13 0 -22.5 9.5 t-9.5 22.5v352h-352q-13 0 -22.5 9.5t-9.5 22.5v192q0 13 9.5 22.5t22.5 9.5h352v352q0 13 9.5 22.5t22.5 9.5h192q13 0 22.5 -9.5t9.5 -22.5v-352zM928 288q0 -52 38 -90t90 -38h256v-238q-68 -50 -171 -50h-874q-121 0 -194 69t-73 190q0 53 3.5 103.5t14 109t26.5 108.5 t43 97.5t62 81t85.5 53.5t111.5 20q19 0 39 -17q79 -61 154.5 -91.5t164.5 -30.5t164.5 30.5t154.5 91.5q20 17 39 17q132 0 217 -96h-223q-52 0 -90 -38t-38 -90v-192z"/></svg>
<div class="abs" style="left:1260px;top:0;width:70px;height:28px;background:#2459c8;border-radius:0 0 3px 3px"></div>
<div class="menu" style="left:1270.300px;top:7.200px;color:#fff;font-size:10.900px">Share</div>
<svg style="position:absolute;left:1307.25px;top:8.25px;width:11.50px;height:11.50px;fill:#fff;overflow:visible;" viewBox="0 -1536 1792 1792"><path transform="scale(1,-1)" d="M1792 896q0 -26 -19 -45l-512 -512q-19 -19 -45 -19t-45 19t-19 45v256h-224q-98 0 -175.5 -6t-154 -21.5t-133 -42.5t-105.5 -69.5t-80 -101t-48.5 -138.5t-17.5 -181q0 -55 5 -123q0 -6 2.5 -23.5t2.5 -26.5q0 -15 -8.5 -25t-23.5 -10q-16 0 -28 17q-7 9 -13 22 t-13.5 30t-10.5 24q-127 285 -127 451q0 199 53 333q162 403 875 403h224v256q0 26 19 45t45 19t45 -19l512 -512q19 -19 19 -45z"/></svg>
<div class="abs" style="left:1334px;top:0;width:25px;height:25px;background:#1b1315;overflow:hidden"><svg width="25" height="25" viewBox="0 0 25 25"><g fill="none" stroke="#a31616" stroke-width="1.100"><circle cx="2" cy="2" r="1.700"/><circle cx="23" cy="2" r="1.700"/><circle cx="2" cy="12" r="1.700"/><circle cx="23" cy="12" r="1.700"/><circle cx="2" cy="22" r="1.700"/><circle cx="23" cy="22" r="1.700"/><circle cx="9.500" cy="1" r="1.500"/><circle cx="15.500" cy="1" r="1.500"/><circle cx="9.500" cy="23" r="1.500"/><circle cx="15.500" cy="23" r="1.500"/><path d="M5 5l3 3M20 5l-3 3M5 19l3-3M20 19l-3-3M12.500 3.500v2M4 12h2M21 12h-2M12.500 20.500v-2" stroke-width="1.400"/><circle cx="12.500" cy="12" r="9" stroke-width=".8" opacity=".7"/></g><rect x="7" y="6.500" width="11" height="11" rx="3.500" fill="#3b3b40"/><rect x="9.300" y="8.800" width="6.400" height="6.400" rx="1.800" fill="#333338"/></svg></div>
<div class="abs" style="left:1334px;top:25px;width:25px;height:3px;background:#f254b4"></div>
<svg style="position:absolute;left:1352.03px;top:17.05px;width:12.54px;height:13.50px;fill:#fff;overflow:visible;" viewBox="0 -1536 1664 1792"><path transform="scale(1,-1)" d="M1664 889q0 -22 -26 -48l-363 -354l86 -500q1 -7 1 -20q0 -21 -10.5 -35.5t-30.5 -14.5q-19 0 -40 12l-449 236l-449 -236q-22 -12 -40 -12q-21 0 -31.5 14.5t-10.5 35.5q0 6 2 20l86 500l-364 354q-25 27 -25 48q0 37 56 46l502 73l225 455q19 41 49 41t49 -41l225 -455 l502 -73q56 -9 56 -46z"/></svg>
</div>
<div id="tools">
<div class="abs" style="left:-1px;top:193px;width:25px;height:25px;background:#3a3a3a;border:1px solid #505050;border-radius:0 3px 3px 0"></div>
<div class="abs" style="left:26px;top:5px;width:3px;height:492px;background:#8a8a8a;border-radius:2px"></div>
<svg class="abs" style="left:4px;top:7.5px;width:15px;height:15px" viewBox="0 0 15 15"><path fill="#eee" d="M.8.6l7.2 3-3 1.3-1.3 3zM10.3 5.2l2 2.2h-1.4v1.8h1.8V7.8l2.2 2-2.2 2v-1.4h-1.8v1.8h1.4l-2 2.2-2-2.2h1.4v-1.8H7.9v1.4l-2.2-2 2.2-2v1.4h1.8V7.4H8.3z"/></svg>
<div class="abs" style="left:5px;top:36.650px;width:12px;height:11px;border:1.3px dashed #ddd"></div>
<div class="abs" style="left:5px;top:63.3px;width:12.5px;height:12.5px;border:1.3px dashed #ddd;border-radius:50%"></div>
<svg class="abs" style="left:4px;top:88.949px;width:15px;height:15px" viewBox="0 0 15 15"><path fill="#eee" d="M1.500 .6l5.200 2.300-2.200.9-.8 2.300z"/><ellipse cx="7.800" cy="8.800" rx="5.600" ry="3" transform="rotate(-6 7.800 8.800)" fill="none" stroke="#eee" stroke-width="1.200"/><path fill="none" stroke="#eee" stroke-width="1.200" d="M4.200 4.200l1.300 2M4 10.600l9.600 3.400"/></svg>
<svg class="abs" style="left:4px;top:116.6px;width:15px;height:14px" viewBox="0 0 15 14"><rect x="2.2" y="2.2" width="10.6" height="9.600" fill="none" stroke="#eee" stroke-width="1.500"/><g fill="#222" stroke="#eee" stroke-width="1.100"><rect x=".6" y=".6" width="3" height="3"/><rect x="11.400" y=".6" width="3" height="3"/><rect x=".6" y="10.400" width="3" height="3"/><rect x="11.400" y="10.400" width="3" height="3"/></g></svg>
<svg style="position:absolute;left:5.25px;top:144.50px;width:12.50px;height:12.50px;fill:#eee;overflow:visible" viewBox="0 0 512 512"><path d="M488 352h-40V96c0-17.67-14.33-32-32-32H192v96h160v328c0 13.250 10.750 24 24 24h48c13.250 0 24-10.750 24-24v-40h40c13.250 0 24-10.750 24-24v-48c0-13.260-10.750-24-24-24zM160 24c0-13.260-10.750-24-24-24H88C74.750 0 64 10.740 64 24v40H24C10.750 64 0 74.740 0 88v48c0 13.250 10.750 24 24 24h40v256c0 17.670 14.330 32 32 32h224v-96H160V24z"/></svg>
<svg style="position:absolute;left:5.25px;top:171.65px;width:12.50px;height:12.50px;fill:#eee;overflow:visible" viewBox="0 0 512 512"><path d="M50.750 333.250c-12 12-18.750 28.280-18.750 45.260V424L0 480l32 32 56-32h45.490c16.970 0 33.250-6.740 45.250-18.740l126.640-126.620-128-128L50.750 333.250zM483.880 28.120c-37.470-37.500-98.280-37.500-135.750 0l-77.090 77.090-13.100-13.100c-9.440-9.440-24.650-9.310-33.940 0l-40.970 40.970c-9.370 9.370-9.370 24.570 0 33.940l161.940 161.940c9.440 9.440 24.650 9.310 33.940 0L419.880 288c9.370-9.370 9.370-24.570 0-33.940l-13.100-13.100 77.090-77.090c37.510-37.480 37.510-98.260.010-135.750z"/></svg>
<svg style="position:absolute;left:6.43px;top:198.55px;width:11.14px;height:13.00px;fill:#fff;overflow:visible;" viewBox="0 -1536 1536 1792"><path transform="scale(1,-1)" d="M363 0l91 91l-235 235l-91 -91v-107h128v-128h107zM886 928q0 22 -22 22q-10 0 -17 -7l-542 -542q-7 -7 -7 -17q0 -22 22 -22q10 0 17 7l542 542q7 7 7 17zM832 1120l416 -416l-832 -832h-416v416zM1515 1024q0 -53 -37 -90l-166 -166l-416 416l166 165q36 38 90 38 q53 0 91 -38l235 -234q37 -39 37 -91z"/></svg>
<svg style="position:absolute;left:5.25px;top:225.95px;width:12.50px;height:12.50px;fill:#eee;overflow:visible;" viewBox="0 -1536 1792 1792"><path transform="scale(1,-1)" d="M1615 1536q70 0 122.5 -46.5t52.5 -116.5q0 -63 -45 -151q-332 -629 -465 -752q-97 -91 -218 -91q-126 0 -216.5 92.5t-90.5 219.5q0 128 92 212l638 579q59 54 130 54zM706 502q39 -76 106.5 -130t150.5 -76l1 -71q4 -213 -129.5 -347t-348.5 -134q-123 0 -218 46.5 t-152.5 127.5t-86.5 183t-29 220q7 -5 41 -30t62 -44.5t59 -36.5t46 -17q41 0 55 37q25 66 57.5 112.5t69.5 76t88 47.5t103 25.5t125 10.5z"/></svg>
<svg style="position:absolute;left:5.25px;top:253.60px;width:12.50px;height:12.50px;fill:#eee;overflow:visible" viewBox="0 0 512 512"><path d="M497.941 273.941c18.745-18.745 18.745-49.137 0-67.882l-160-160c-18.745-18.745-49.136-18.746-67.883 0l-256 256c-18.745 18.745-18.745 49.137 0 67.882l96 96A48.004 48.004 0 0 0 144 480h356c6.627 0 12-5.373 12-12v-40c0-6.627-5.373-12-12-12H355.883l142.058-142.059zm-302.627-62.627l137.373 137.373L265.373 416H150.628l-80-80 124.686-124.686z"/></svg>
<svg style="position:absolute;left:7.25px;top:280.75px;width:11.50px;height:11.50px;fill:#eee;overflow:visible;" viewBox="0 -1536 1792 1792"><path transform="scale(1,-1)" d="M1615 1536q70 0 122.5 -46.5t52.5 -116.5q0 -63 -45 -151q-332 -629 -465 -752q-97 -91 -218 -91q-126 0 -216.5 92.5t-90.5 219.5q0 128 92 212l638 579q59 54 130 54zM706 502q39 -76 106.5 -130t150.5 -76l1 -71q4 -213 -129.5 -347t-348.5 -134q-123 0 -218 46.5 t-152.5 127.5t-86.5 183t-29 220q7 -5 41 -30t62 -44.5t59 -36.5t46 -17q41 0 55 37q25 66 57.5 112.5t69.5 76t88 47.5t103 25.5t125 10.5z"/></svg>
<div class="abs" style="left:5px;top:279.5px;width:2.5px;height:5px;background:#eee;transform:rotate(-20deg)"></div>
<svg class="abs" style="left:4px;top:306.65px;width:15px;height:14px" viewBox="0 0 15 14"><path fill="#eee" d="M7.500 1C3.500 1 .8 3.400.8 6.300c0 2.400 2 4.200 4.700 4.600 1 .1 1.300 1.600 2.400 1.600 1.200 0 1.400-1.700.6-2.600-.6-.8 0-1.700 1-1.700h2.200c1.500 0 2.500-.9 2.500-2.200C14.200 3.200 11.400 1 7.500 1z"/><circle cx="5" cy="8" r="1.200" fill="#222"/></svg>
<div class="abs" style="left:16.300px;top:320.15px;width:7.400px;height:7.400px;border-radius:50%;background:#6e3ad6"></div>
<svg class="abs" style="left:4px;top:333.799px;width:16px;height:14px" viewBox="0 0 16 14"><path fill="#eee" d="M6.200.6l6.600 6.200-5 4.800c-.7.600-1.600.6-2.300 0L1.700 8c-.6-.7-.6-1.600 0-2.200l3-2.900-1.500-1.400 1-1 1.500 1.400zM3.400 6.600h6.800L6.200 2.800z"/><path fill="#eee" d="M14 8.600s1.500 2 1.500 3.100a1.500 1.500 0 0 1-3 0c0-1.100 1.500-3.100 1.500-3.100z"/></svg>
<svg class="abs" style="left:4px;top:360.95px;width:15px;height:14px" viewBox="0 0 15 14"><path fill="#eee" d="M7.5 1.600s2.200 2.400 2.200 3.800a2.200 2.200 0 0 1-4.400 0c0-1.400 2.200-3.800 2.200-3.800z"/><path fill="none" stroke="#eee" stroke-width="1.200" d="M4.200 6.200c-2 .8-2.800 2-2.400 3.200.6 1.500 3.600 1.800 6.600.9 3-.9 5-2.600 4.600-4-.2-.7-1-1.200-2-1.400M3.500 9.500l9.500 3.500"/></svg>
<svg class="abs" style="left:5.500px;top:389.099px;width:12px;height:12px" viewBox="0 0 12 12"><path fill="#eee" d="M.5 .5h11v3.300h-1.500l-.4-1.600H7.100v7.800l1.700.3v1.200H3.200v-1.200l1.700-.3V2.200H2.400l-.4 1.600H.5z"/></svg>
<div class="abs" style="left:5.5px;top:416.25px;width:12px;height:12px;background:#eee;border-radius:1px"></div>
<div class="abs" style="left:5px;top:442.9px;width:13px;height:13px;background:#eee;border-radius:50%"></div>
<svg class="abs" style="left:4.700px;top:469.749px;width:13px;height:13px" viewBox="0 0 13 13"><path d="M6.50 1.60L8.09 4.62L11.45 5.19L9.07 7.63L9.56 11.01L6.50 9.50L3.44 11.01L3.93 7.63L1.55 5.19L4.91 4.62Z" fill="#eee" stroke="#eee" stroke-width="2" stroke-linejoin="round"/></svg>
<svg class="abs" style="left:4.500px;top:496.700px;width:13px;height:14px" viewBox="0 0 13 14"><g fill="#eee"><rect x="3.100" y="1.700" width="1.800" height="6.500" rx=".9"/><rect x="5.200" y=".5" width="1.800" height="7.500" rx=".9"/><rect x="7.300" y="1" width="1.800" height="7" rx=".9"/><rect x="9.400" y="2.500" width="1.700" height="6" rx=".85"/><path d="M3.100 6.500h8v3.600c0 2.100-1.500 3.500-3.800 3.500-2 0-3-.7-4-2.200L1.100 8.400c-.5-.9.600-1.700 1.300-.9l.7.900z"/></g></svg>
<svg style="position:absolute;left:6.14px;top:524.60px;width:10.71px;height:12.50px;fill:#eee;overflow:visible;" viewBox="0 -1536 1536 1792"><path transform="scale(1,-1)" d="M1536 640q0 -156 -61 -298t-164 -245t-245 -164t-298 -61q-172 0 -327 72.5t-264 204.5q-7 10 -6.5 22.5t8.5 20.5l137 138q10 9 25 9q16 -2 23 -12q73 -95 179 -147t225 -52q104 0 198.5 40.5t163.5 109.5t109.5 163.5t40.5 198.5t-40.5 198.5t-109.5 163.5 t-163.5 109.5t-198.5 40.5q-98 0 -188 -35.5t-160 -101.5l137 -138q31 -30 14 -69q-17 -40 -59 -40h-448q-26 0 -45 19t-19 45v448q0 42 40 59q39 17 69 -14l130 -129q107 101 244.5 156.5t284.5 55.5q156 0 298 -61t245 -164t164 -245t61 -298z"/></svg>
<svg style="position:absolute;left:5.70px;top:551.75px;width:11.61px;height:12.50px;fill:#eee;overflow:visible;" viewBox="0 -1536 1664 1792"><path transform="scale(1,-1)" d="M1152 704q0 185 -131.5 316.5t-316.5 131.5t-316.5 -131.5t-131.5 -316.5t131.5 -316.5t316.5 -131.5t316.5 131.5t131.5 316.5zM1664 -128q0 -52 -38 -90t-90 -38q-54 0 -90 38l-343 342q-179 -124 -399 -124q-143 0 -273.5 55.5t-225 150t-150 225t-55.5 273.5 t55.5 273.5t150 225t225 150t273.5 55.5t273.5 -55.5t225 -150t150 -225t55.5 -273.5q0 -220 -124 -399l343 -343q37 -37 37 -90z"/></svg>
<div class="abs" style="left:4.200px;top:579.700px;width:13.800px;height:6px;background:#eee;border-radius:2.500px 2.500px 0 0"></div>
</div>
<div id="status">
<svg class="abs" style="left:7px;top:5.500px;width:14px;height:10px" viewBox="0 0 14 10"><path fill="#eee" fill-rule="evenodd" d="M1 0h12a1 1 0 0 1 1 1v8a1 1 0 0 1-1 1H1a1 1 0 0 1-1-1V1a1 1 0 0 1 1-1zM3.800 1v3.400h6.400V1zM3.800 5.600V9h6.400V5.600zM1 1.200v1.500h1.600V1.200zM1 4.200v1.500h1.600V4.200zM1 7.200v1.500h1.600V7.200zM11.400 1.200v1.500H13V1.200zM11.400 4.200v1.500H13V4.200zM11.400 7.200v1.500H13V7.200z"/></svg>
<div class="abs" style="left:29px;top:0;width:1px;height:26px;background:#333"></div><div class="abs" style="left:30px;top:0.500px;width:1125px;height:1px;background:#383838"></div>
<div class="t" style="left:846px;top:8.700px">Stroke Count: 318</div>
<div class="abs" style="left:935px;top:8px;width:1px;height:14px;background:#555"></div>
<div class="t" style="left:940.500px;top:8.700px">Stroke Milestone:</div>
<div class="abs" style="left:1028px;top:8.300px;width:120px;height:12.600px;background:#141414;border-radius:2px;overflow:hidden"><div class="abs" style="left:0;top:0;width:64px;height:100%;background:#0c8a0c"></div><div class="t" style="left:4px;top:.5px;color:#fff">318</div><div class="t" style="right:4px;top:.5px;color:#fff">600</div></div>
</div>
<div id="right"><div class="abs" style="left:-1156px;top:-31px;width:1363px;height:643px">
<div class="abs" style="left:1171.800px;top:49px;width:16.300px;height:16px;background:#000;border:1.200px solid #fff;border-radius:1.500px;box-shadow:0 0 0 1px #000"></div>
<div class="abs" style="left:1161.900px;top:35.900px;width:16.300px;height:16px;background:#5e2700;border:1.200px solid #fff;border-radius:1.500px;box-shadow:0 0 0 1px #000"></div>
<svg class="abs" style="left:1179.500px;top:37px;width:9px;height:8px" viewBox="0 0 9 8"><path d="M2 1.800C4.500 1.500 6.500 3 6.800 5.600" fill="none" stroke="#aaa" stroke-width="1.300"/><path d="M.3 1.800L3 .2l.3 3zM5 4.800l3.600-.3L7 7.600z" fill="#aaa"/></svg>
<div class="abs" style="left:1309px;top:36px;width:51.5px;height:15.500px;background:#181818;border:1px solid #444;border-radius:2px"></div>
<div class="t" style="left:1317.3px;top:39px;font-family:'Liberation Mono',monospace;font-size:10px;color:#eee;letter-spacing:0">5e2700</div>
<div class="abs" style="left:1183.10px;top:50.10px;width:156.40px;height:156.40px;border-radius:50%;background:#ddd"></div>
<div class="abs" style="left:1184.40px;top:51.40px;width:153.80px;height:153.80px;border-radius:50%;background:#222"></div>
<div class="abs" style="left:1185.20px;top:52.20px;width:152.20px;height:152.20px;border-radius:50%;background:conic-gradient(#f00,#ff0,#0f0,#0ff,#00f,#f0f,#f00)"></div>
<div class="abs" style="left:1200.90px;top:67.90px;width:120.80px;height:120.80px;border-radius:50%;background:#222"></div>
<div class="abs" style="left:1201.40px;top:68.40px;width:119.80px;height:119.80px;border-radius:50%;background:#ddd"></div>
<div class="abs" style="left:1202.80px;top:69.80px;width:117.00px;height:117.00px;border-radius:50%;background:#222"></div>
<div class="abs" style="left:1220.800px;top:88.800px;width:81.400px;height:81.400px;background:#ddd"></div>
<div class="abs" style="left:1222.400px;top:90.400px;width:78.200px;height:78.200px;background:linear-gradient(to bottom,rgba(0,0,0,0),#000),linear-gradient(to right,#fff,#ff6a00)"></div>
<div class="abs" style="left:1284.7px;top:62.1px;width:9px;height:9px;border-radius:50%;background:#ff6a00;border:1.200px solid #fff;box-shadow:inset 0 0 0 1px #222,0 0 0 .6px #333"></div>
<div class="abs" style="left:1294.5px;top:134.5px;width:9px;height:9px;border-radius:50%;background:#5e2700;border:1.200px solid #fff;box-shadow:inset 0 0 0 1px #222,0 0 0 .6px #333"></div>
<svg style="position:absolute;left:1173.14px;top:189.50px;width:5.71px;height:8.00px;fill:#eee;overflow:visible;" viewBox="0 -1536 1280 1792"><path transform="scale(1,-1)" d="M1107 659l-742 -742q-19 -19 -45 -19t-45 19l-166 166q-19 19 -19 45t19 45l531 531l-531 531q-19 19 -19 45t19 45l166 166q19 19 45 19t45 -19l742 -742q19 -19 19 -45t-19 -45z"/></svg>
<svg style="position:absolute;left:1341.56px;top:187.30px;width:10.29px;height:12.00px;fill:#eee;overflow:visible;" viewBox="0 -1536 1536 1792"><path transform="scale(1,-1)" d="M1024 640q0 106 -75 181t-181 75t-181 -75t-75 -181t75 -181t181 -75t181 75t75 181zM1536 749v-222q0 -12 -8 -23t-20 -13l-185 -28q-19 -54 -39 -91q35 -50 107 -138q10 -12 10 -25t-9 -23q-27 -37 -99 -108t-94 -71q-12 0 -26 9l-138 108q-44 -23 -91 -38 q-16 -136 -29 -186q-7 -28 -36 -28h-222q-14 0 -24.5 8.5t-11.5 21.5l-28 184q-49 16 -90 37l-141 -107q-10 -9 -25 -9q-14 0 -25 11q-126 114 -165 168q-7 10 -7 23q0 12 8 23q15 21 51 66.5t54 70.5q-27 50 -41 99l-183 27q-13 2 -21 12.5t-8 23.5v222q0 12 8 23t19 13 l186 28q14 46 39 92q-40 57 -107 138q-10 12 -10 24q0 10 9 23q26 36 98.5 107.5t94.5 71.5q13 0 26 -10l138 -107q44 23 91 38q16 136 29 186q7 28 36 28h222q14 0 24.5 -8.5t11.5 -21.5l28 -184q49 -16 90 -37l142 107q9 9 24 9q13 0 25 -10q129 -119 165 -170q7 -8 7 -22 q0 -12 -8 -23q-15 -21 -51 -66.5t-54 -70.5q26 -50 41 -98l183 -28q13 -2 21 -12.5t8 -23.5z"/></svg>
<div class="abs" style="left:1160.9px;top:213.8px;width:29px;height:29px;border-radius:50%;background:#333"></div>
<svg style="position:absolute;left:1169.31px;top:221.25px;width:11.57px;height:13.50px;fill:#eee;overflow:visible;" viewBox="0 -1536 1536 1792"><path transform="scale(1,-1)" d="M363 0l91 91l-235 235l-91 -91v-107h128v-128h107zM886 928q0 22 -22 22q-10 0 -17 -7l-542 -542q-7 -7 -7 -17q0 -22 22 -22q10 0 17 7l542 542q7 7 7 17zM832 1120l416 -416l-832 -832h-416v416zM1515 1024q0 -53 -37 -90l-166 -166l-416 416l166 165q36 38 90 38 q53 0 91 -38l235 -234q37 -39 37 -91z"/></svg>
<div class="abs" style="left:1177.4px;top:231px;width:12px;height:12px;border-radius:50%;background:#222;color:#fff;font-weight:bold;font-size:10.200px;text-align:center;line-height:12px">1</div>
<div class="abs" style="left:1194.9px;top:213.8px;width:29px;height:29px;border-radius:50%;background:#333"></div>
<svg style="position:absolute;left:1203.31px;top:221.25px;width:11.57px;height:13.50px;fill:#eee;overflow:visible;" viewBox="0 -1536 1536 1792"><path transform="scale(1,-1)" d="M363 0l91 91l-235 235l-91 -91v-107h128v-128h107zM886 928q0 22 -22 22q-10 0 -17 -7l-542 -542q-7 -7 -7 -17q0 -22 22 -22q10 0 17 7l542 542q7 7 7 17zM832 1120l416 -416l-832 -832h-416v416zM1515 1024q0 -53 -37 -90l-166 -166l-416 416l166 165q36 38 90 38 q53 0 91 -38l235 -234q37 -39 37 -91z"/></svg>
<div class="abs" style="left:1211.4px;top:231px;width:12px;height:12px;border-radius:50%;background:#222;color:#fff;font-weight:bold;font-size:10.200px;text-align:center;line-height:12px">2</div>
<div class="abs" style="left:1228.9px;top:213.8px;width:29px;height:29px;border-radius:50%;background:#333"></div>
<svg style="position:absolute;left:1236.40px;top:221.50px;width:12.00px;height:12.00px;fill:#eee;overflow:visible;" viewBox="0 -1536 1792 1792"><path transform="scale(1,-1)" d="M1615 1536q70 0 122.5 -46.5t52.5 -116.5q0 -63 -45 -151q-332 -629 -465 -752q-97 -91 -218 -91q-126 0 -216.5 92.5t-90.5 219.5q0 128 92 212l638 579q59 54 130 54zM706 502q39 -76 106.5 -130t150.5 -76l1 -71q4 -213 -129.5 -347t-348.5 -134q-123 0 -218 46.5 t-152.5 127.5t-86.5 183t-29 220q7 -5 41 -30t62 -44.5t59 -36.5t46 -17q41 0 55 37q25 66 57.5 112.5t69.5 76t88 47.5t103 25.5t125 10.5z"/></svg>
<div class="abs" style="left:1245.4px;top:231px;width:12px;height:12px;border-radius:50%;background:#222;color:#fff;font-weight:bold;font-size:10.200px;text-align:center;line-height:12px">3</div>
<div class="abs" style="left:1263.0px;top:213.8px;width:29px;height:29px;border-radius:50%;background:#1c2f5c;border:1px solid #3f7be8"></div>
<svg style="position:absolute;left:1271.41px;top:221.25px;width:11.57px;height:13.50px;fill:#eee;overflow:visible;" viewBox="0 -1536 1536 1792"><path transform="scale(1,-1)" d="M363 0l91 91l-235 235l-91 -91v-107h128v-128h107zM886 928q0 22 -22 22q-10 0 -17 -7l-542 -542q-7 -7 -7 -17q0 -22 22 -22q10 0 17 7l542 542q7 7 7 17zM832 1120l416 -416l-832 -832h-416v416zM1515 1024q0 -53 -37 -90l-166 -166l-416 416l166 165q36 38 90 38 q53 0 91 -38l235 -234q37 -39 37 -91z"/></svg>
<div class="abs" style="left:1279.5px;top:231px;width:12px;height:12px;border-radius:50%;background:#fff;color:#223;font-weight:bold;font-size:10.200px;text-align:center;line-height:12px">4</div>
<div class="abs" style="left:1297.0px;top:213.8px;width:29px;height:29px;border-radius:50%;background:#333"></div>
<svg style="position:absolute;left:1304.50px;top:221.50px;width:12.00px;height:12.00px;fill:#eee;overflow:visible;" viewBox="0 -1536 1792 1792"><path transform="scale(1,-1)" d="M1615 1536q70 0 122.5 -46.5t52.5 -116.5q0 -63 -45 -151q-332 -629 -465 -752q-97 -91 -218 -91q-126 0 -216.5 92.5t-90.5 219.5q0 128 92 212l638 579q59 54 130 54zM706 502q39 -76 106.5 -130t150.5 -76l1 -71q4 -213 -129.5 -347t-348.5 -134q-123 0 -218 46.5 t-152.5 127.5t-86.5 183t-29 220q7 -5 41 -30t62 -44.5t59 -36.5t46 -17q41 0 55 37q25 66 57.5 112.5t69.5 76t88 47.5t103 25.5t125 10.5z"/></svg>
<div class="abs" style="left:1313.5px;top:231px;width:12px;height:12px;border-radius:50%;background:#222;color:#fff;font-weight:bold;font-size:10.200px;text-align:center;line-height:12px">5</div>
<div class="abs" style="left:1330.9px;top:213.8px;width:29px;height:29px;border-radius:50%;background:#333"></div>
<svg style="position:absolute;left:1339.31px;top:221.25px;width:11.57px;height:13.50px;fill:#eee;overflow:visible;" viewBox="0 -1536 1536 1792"><path transform="scale(1,-1)" d="M363 0l91 91l-235 235l-91 -91v-107h128v-128h107zM886 928q0 22 -22 22q-10 0 -17 -7l-542 -542q-7 -7 -7 -17q0 -22 22 -22q10 0 17 7l542 542q7 7 7 17zM832 1120l416 -416l-832 -832h-416v416zM1515 1024q0 -53 -37 -90l-166 -166l-416 416l166 165q36 38 90 38 q53 0 91 -38l235 -234q37 -39 37 -91z"/></svg>
<div class="abs" style="left:1347.4px;top:231px;width:12px;height:12px;border-radius:50%;background:#222;color:#fff;font-weight:bold;font-size:10.200px;text-align:center;line-height:12px">6</div>
<div class="btn" style="left:1161px;top:253.100px;width:42px;height:15.500px"></div>
<div class="t" style="left:1165px;top:254.600px;color:#eee">Size x1</div>
<svg class="abs" style="left:1213.500px;top:254.100px;width:11px;height:11px" viewBox="0 0 11 11"><circle cx="5" cy="6" r="4.200" fill="none" stroke="#eee" stroke-width="1.100"/><circle cx="5" cy="6" r="2" fill="none" stroke="#eee" stroke-width="1"/><path d="M5 6l4.500-4.800" stroke="#222" stroke-width="3"/><path d="M5 6l4.600-5" stroke="#eee" stroke-width="1.500"/></svg>
<div class="track" style="left:1231.2px;top:259.1px;width:104.0px"></div>
<div class="fill" style="left:1231.2px;top:259.1px;width:10.009px"></div>
<div class="thumb" style="left:1237.01px;top:256.400px"></div>
<div class="val" style="left:1334.500px;top:255.8px">7.0</div>
<div class="t" style="left:1161.200px;top:273.7px;letter-spacing:-.25px">Min size</div>
<div class="track" style="left:1231.2px;top:278.2px;width:104.0px"></div>
<div class="thumb" style="left:1231.5px;top:275.5px"></div>
<div class="val" style="left:1334.500px;top:274.9px">0</div>
<div class="t" style="left:1161.200px;top:292.8px">Size jitter</div>
<div class="track" style="left:1231.2px;top:297.3px;width:104.0px"></div>
<div class="thumb" style="left:1231.5px;top:294.6px"></div>
<div class="val" style="left:1334.500px;top:294.0px">0</div>
<div class="t" style="left:1161.200px;top:312.9px">Flow</div>
<svg class="abs" style="left:1213.500px;top:311.7px;width:11px;height:11px" viewBox="0 0 11 11"><circle cx="5" cy="6" r="4.200" fill="none" stroke="#eee" stroke-width="1.100"/><circle cx="5" cy="6" r="2" fill="none" stroke="#eee" stroke-width="1"/><path d="M5 6l4.500-4.800" stroke="#222" stroke-width="3"/><path d="M5 6l4.600-5" stroke="#eee" stroke-width="1.500"/></svg>
<div class="track" style="left:1231.2px;top:316.7px;width:104.0px"></div>
<div class="fill" style="left:1231.2px;top:316.7px;width:99.5px"></div>
<div class="thumb" style="left:1326.5px;top:314.0px"></div>
<div class="val" style="left:1334.500px;top:313.4px">100</div>
<div class="t" style="left:1161.200px;top:331.9px">Opacity</div>
<svg class="abs" style="left:1213.500px;top:330.7px;width:11px;height:11px" viewBox="0 0 11 11"><circle cx="5" cy="6" r="4.200" fill="none" stroke="#eee" stroke-width="1.100"/><circle cx="5" cy="6" r="2" fill="none" stroke="#eee" stroke-width="1"/><path d="M5 6l4.500-4.800" stroke="#222" stroke-width="3"/><path d="M5 6l4.600-5" stroke="#eee" stroke-width="1.500"/></svg>
<div class="track" style="left:1231.2px;top:335.7px;width:104.0px"></div>
<div class="fill" style="left:1231.2px;top:335.7px;width:99.5px"></div>
<div class="thumb" style="left:1326.5px;top:333.0px"></div>
<div class="val" style="left:1334.500px;top:332.4px">100</div>
<div class="t" style="left:1161.200px;top:351.0px">Stabilizer</div>
<div class="track" style="left:1231.2px;top:354.8px;width:104.0px"></div>
<div class="thumb" style="left:1231.5px;top:352.1px"></div>
<div class="val" style="left:1334.500px;top:351.5px">0</div>
<div class="abs" style="left:1157px;top:389px;width:206px;height:1px;background:#3a3a3a"></div>
<div class="abs" style="left:1247px;top:388px;width:28px;height:3px;background:#666;border-radius:2px"></div>
<div class="t" style="left:1162.300px;top:396.200px;color:#eee">Layers</div>
<div class="abs" style="left:1212.200px;top:394.500px;width:105.800px;height:15px;background:#141414;border:1px solid #4c4c4c;border-radius:2px"></div>
<svg class="abs" style="left:1219.300px;top:396.400px;width:10px;height:10px" viewBox="0 0 10 10"><circle cx="4" cy="4" r="3" fill="none" stroke="#eee" stroke-width="1.700"/><path d="M6.200 6.200L9.200 9.200" stroke="#eee" stroke-width="1.800" stroke-linecap="round"/></svg>
<div class="t" style="left:1234.300px;top:396.500px;color:#8c8c8c">search layers...</div>
<div class="btn" style="left:1325px;top:394.300px;width:16px;height:15.600px"></div>
<div class="btn" style="left:1344px;top:394.300px;width:16px;height:15.600px"></div>
<svg style="position:absolute;left:1328.71px;top:395.80px;width:8.57px;height:10.00px;fill:#5a5a5a;overflow:visible;" viewBox="0 -1536 1536 1792"><path transform="scale(1,-1)" d="M1024 1024v472q22 -14 36 -28l408 -408q14 -14 28 -36h-472zM896 992q0 -40 28 -68t68 -28h544v-1056q0 -40 -28 -68t-68 -28h-1344q-40 0 -68 28t-28 68v1600q0 40 28 68t68 28h800v-544z"/></svg>
<svg style="position:absolute;left:1347.71px;top:395.80px;width:8.57px;height:10.00px;fill:#eee;overflow:visible;" viewBox="0 -1536 1536 1792"><path transform="scale(1,-1)" d="M1024 1024v472q22 -14 36 -28l408 -408q14 -14 28 -36h-472zM896 992q0 -40 28 -68t68 -28h544v-1056q0 -40 -28 -68t-68 -28h-1344q-40 0 -68 28t-28 68v1600q0 40 28 68t68 28h800v-544z"/></svg>
<div class="abs" style="left:1351.200px;top:399.500px;width:1.600px;height:3.500px;background:#333"></div><div class="abs" style="left:1349.600px;top:402px;width:0;height:0;border:2.400px solid transparent;border-top:2.600px solid #333"></div><div class="abs" style="left:1332.200px;top:399.500px;width:1.600px;height:3.500px;background:#333"></div><div class="abs" style="left:1330.600px;top:402px;width:0;height:0;border:2.400px solid transparent;border-top:2.600px solid #333"></div>
<div class="t" style="left:1162.300px;top:414.800px">Lock</div>
<svg class="abs" style="left:1189.500px;top:414.500px;width:11px;height:11px" viewBox="0 0 4 4" shape-rendering="crispEdges"><path fill="#eee" d="M0 0h1v1h-1zM2 0h1v1h-1zM1 1h1v1h-1zM3 1h1v1h-1zM0 2h1v1h-1zM2 2h1v1h-1zM1 3h1v1h-1zM3 3h1v1h-1z"/></svg>
<svg style="position:absolute;left:1209.78px;top:414.55px;width:8.04px;height:12.50px;fill:#eee;overflow:visible;" viewBox="0 -1536 1152 1792"><path transform="scale(1,-1)" d="M320 768h512v192q0 106 -75 181t-181 75t-181 -75t-75 -181v-192zM1152 672v-576q0 -40 -28 -68t-68 -28h-960q-40 0 -68 28t-28 68v576q0 40 28 68t68 28h32v192q0 184 132 316t316 132t316 -132t132 -316v-192h32q40 0 68 -28t28 -68z"/></svg>
<div class="btn" style="left:1226px;top:413.300px;width:16px;height:15.600px"></div>
<div class="btn" style="left:1245.2px;top:413.300px;width:16px;height:15.600px"></div>
<div class="btn" style="left:1264.4px;top:413.300px;width:16px;height:15.600px"></div>
<div class="btn" style="left:1284px;top:413.300px;width:16px;height:15.600px"></div>
<div class="btn" style="left:1304px;top:413.300px;width:16px;height:15.600px"></div>
<div class="btn" style="left:1324px;top:413.300px;width:16px;height:15.600px"></div>
<div class="btn" style="left:1344px;top:413.300px;width:16px;height:15.600px"></div>
<svg style="position:absolute;left:1229.12px;top:414.95px;width:9.75px;height:10.50px;fill:#eee;overflow:visible;" viewBox="0 -1536 1664 1792"><path transform="scale(1,-1)" d="M640 96q0 -4 1 -20t0.5 -26.5t-3 -23.5t-10 -19.5t-20.5 -6.5h-320q-119 0 -203.5 84.5t-84.5 203.5v704q0 119 84.5 203.5t203.5 84.5h320q13 0 22.5 -9.5t9.5 -22.5q0 -4 1 -20t0.5 -26.5t-3 -23.5t-10 -19.5t-20.5 -6.5h-320q-66 0 -113 -47t-47 -113v-704 q0 -66 47 -113t113 -47h288h11h13t11.5 -1t11.5 -3t8 -5.5t7 -9t2 -13.5zM1568 640q0 -26 -19 -45l-544 -544q-19 -19 -45 -19t-45 19t-19 45v288h-448q-26 0 -45 19t-19 45v384q0 26 19 45t45 19h448v288q0 26 19 45t45 19t45 -19l544 -544q19 -19 19 -45z"/></svg>
<svg style="position:absolute;left:1248.20px;top:415.30px;width:10.00px;height:10.00px;fill:#eee;overflow:visible" viewBox="0 0 512 512"><path d="M497.941 273.941c18.745-18.745 18.745-49.137 0-67.882l-160-160c-18.745-18.745-49.136-18.746-67.883 0l-256 256c-18.745 18.745-18.745 49.137 0 67.882l96 96A48.004 48.004 0 0 0 144 480h356c6.627 0 12-5.373 12-12v-40c0-6.627-5.373-12-12-12H355.883l142.058-142.059zm-302.627-62.627l137.373 137.373L265.373 416H150.628l-80-80 124.686-124.686z"/></svg>
<svg class="abs" style="left:1267.40px;top:415.30px;width:10px;height:11px" viewBox="0 0 10 11"><path fill="#eee" d="M3.500 0h3l.5 1H9.500v1.600H.5V1H3zM1.200 3.400h7.600l-.5 6.700a1 1 0 0 1-1 .9H2.700a1 1 0 0 1-1-.9z"/></svg>
<svg class="abs" style="left:1287.50px;top:415.50px;width:9px;height:11px" viewBox="0 0 9 11"><path fill="none" stroke="#eee" stroke-width="1.600" d="M8 1H4.800v7"/><path fill="#eee" d="M1.200 6.800h7.200L4.800 10.800z"/></svg>
<svg class="abs" style="left:1307.00px;top:415.50px;width:10.5px;height:10.5px" viewBox="0 0 10.5 10.5"><rect x=".3" y="2.300" width="7.800" height="7.800" rx="1" fill="#eee"/><rect x="1.900" y="-.2" width="8.800" height="8.800" rx="1.500" fill="#333"/><rect x="2.500" y=".3" width="7.800" height="7.800" rx="1" fill="#eee"/></svg>
<svg class="abs" style="left:1325.50px;top:415.50px;width:13px;height:11px" viewBox="0 0 13 11"><path fill="none" stroke="#eee" stroke-width="1.500" d="M.8 2.300l3.600 3.800M4.400 2.300L.8 6.100"/><path fill="none" stroke="#eee" stroke-width="1.600" d="M5.500 1.300h1.800q1.500 0 1.500 1.500v5"/><path fill="#eee" d="M5.800 7h6L8.800 10.500z"/></svg>
<svg class="abs" style="left:1347.50px;top:416.00px;width:10px;height:9.5px" viewBox="0 0 10 9.5"><rect x="0" y="0" width="9.200" height="8.600" rx="1.200" fill="#eee"/><path fill="#333" d="M4.200 2h1.300v2.600h1.600L4.850 7 2.600 4.600h1.600zM7 6.500h2.500v2.500H7z"/><path fill="#eee" d="M7.600 7.100l1.900 0-1 1.600z"/></svg>
<div class="btn" style="left:1162px;top:432.300px;width:56px;height:15.500px"></div>
<div class="t" style="left:1168px;top:434px;color:#fff">normal</div>
<svg style="position:absolute;left:1205.80px;top:437.20px;width:5.00px;height:5.00px;fill:#eee;overflow:visible;" viewBox="0 -1536 1792 1792"><path transform="scale(1,-1)" d="M1683 728l-742 -741q-19 -19 -45 -19t-45 19l-742 741q-19 19 -19 45.5t19 45.5l166 165q19 19 45 19t45 -19l531 -531l531 531q19 19 45 19t45 -19l166 -165q19 -19 19 -45.5t-19 -45.5z"/></svg>
<div class="t" style="left:1221px;top:434.500px">Opacity</div>
<div class="track" style="left:1261.200px;top:438.500px;width:72.800px"></div><div class="fill" style="left:1261.200px;top:438.500px;width:68px"></div><div class="thumb" style="left:1325.500px;top:435.800px"></div>
<div class="val" style="left:1334.500px;top:434.600px">100</div>
<div class="lrow" style="top:455.2px;height:35.750px;background:#1f2f53;border-top:1.200px solid #2f6fe6;border-bottom:1.200px solid #2f6fe6;">
<div class="strip" style="background:#ff55bb;"></div>
<div class="thumbn" style="top:1.8px"><svg width="31.500" height="31.500" viewBox="0 0 31.500 31.500" style="position:absolute;left:0;top:0"><defs><pattern id="chk" width="10" height="10" patternUnits="userSpaceOnUse"><rect width="10" height="10" fill="#f2f2f2"/><rect width="5" height="5" fill="#c6c6c6"/><rect x="5" y="5" width="5" height="5" fill="#c6c6c6"/></pattern></defs><rect x="1" y="1" width="29.500" height="29.500" fill="url(#chk)"/><path d="M3 11c0-4 4-7 9-7l3-3 1 3c5-1 11 0 11 5 0 4-6 5-11 5-4 1-8 1-10 0-2-.5-3-1.500-3-3z" fill="#743005"/><rect x="1" y="20" width="2.500" height="4.500" rx="1" fill="#4a1c00"/><circle cx="23.500" cy="21" r="1" fill="#e060c0"/><path d="M10 24.500l5-.5-2 4M12 26l3 .5M27 24l3-1M27 26.500h3M27 28.500l3 1.500" stroke="#d07a30" stroke-width="1" fill="none"/></svg></div>
<div class="lname" style="top:4px">Layer #4</div>
<div class="lsub" style="top:21.5px">normal 100% | <b>attendent…</b></div>
</div>
<svg class="abs" style="left:1166.700px;top:461.5px;width:11.600px;height:7.400px" viewBox="0 0 11.600 7.400"><path fill="#f2f2f2" d="M5.800 .2C2.900 .2 1 2.100 .1 3.700c.9 1.600 2.800 3.500 5.700 3.500s4.800-1.900 5.700-3.500C10.600 2.100 8.700 .2 5.800 .2z"/><circle cx="5.800" cy="3.700" r="2.100" fill="none" stroke="#1f2f53" stroke-width="1"/><circle cx="5.200" cy="3" r=".8" fill="#1f2f53"/></svg>
<svg class="abs" style="left:1166px;top:472.2px;width:13px;height:12px" viewBox="0 0 13 12"><path d="M2 .5v8.500h4" fill="none" stroke="#ccc" stroke-width="1.300"/><circle cx="5" cy="3" r="1.300" fill="#ccc"/><ellipse cx="9" cy="8.500" rx="3.300" ry="2.300" fill="none" stroke="#ccc" stroke-width="1"/><circle cx="9" cy="8.500" r="1" fill="#ccc"/></svg>
<svg style="position:absolute;left:1324.85px;top:460.95px;width:9.50px;height:9.50px;fill:#eee;overflow:visible;" viewBox="0 -1536 1792 1792"><path transform="scale(1,-1)" d="M1615 1536q70 0 122.5 -46.5t52.5 -116.5q0 -63 -45 -151q-332 -629 -465 -752q-97 -91 -218 -91q-126 0 -216.5 92.5t-90.5 219.5q0 128 92 212l638 579q59 54 130 54zM706 502q39 -76 106.5 -130t150.5 -76l1 -71q4 -213 -129.5 -347t-348.5 -134q-123 0 -218 46.5 t-152.5 127.5t-86.5 183t-29 220q7 -5 41 -30t62 -44.5t59 -36.5t46 -17q41 0 55 37q25 66 57.5 112.5t69.5 76t88 47.5t103 25.5t125 10.5z"/></svg>
<svg style="position:absolute;left:1348.07px;top:459.45px;width:2.46px;height:11.50px;fill:#eee;overflow:visible;" viewBox="0 -1536 384 1792"><path transform="scale(1,-1)" d="M384 288v-192q0 -40 -28 -68t-68 -28h-192q-40 0 -68 28t-28 68v192q0 40 28 68t68 28h192q40 0 68 -28t28 -68zM384 800v-192q0 -40 -28 -68t-68 -28h-192q-40 0 -68 28t-28 68v192q0 40 28 68t68 28h192q40 0 68 -28t28 -68zM384 1312v-192q0 -40 -28 -68t-68 -28h-192 q-40 0 -68 28t-28 68v192q0 40 28 68t68 28h192q40 0 68 -28t28 -68z"/></svg>
<div class="lrow" style="top:490.95px;height:35.750px;">
<div class="strip" style=""></div>
<div class="thumbn" style="top:3.3px"><svg width="31.500" height="31.500" viewBox="0 0 31.500 31.500" style="position:absolute;left:0;top:0"><defs></defs><rect x="1" y="4" width="29.500" height="24" fill="url(#chk)"/><path d="M2 9c2-3 6-3 6 1 0 3-3 4-5 4M1.500 14c2 3 4 4 7 2 3-2 7 0 10 1 3 .5 5-1 6-4l.5-4M2 22c2 3 5 4.500 9 3.500 2 .5 8 1.500 12 0 3-1 4.500-4 5-8l-.5-6" stroke="#9a5a38" stroke-width=".9" fill="none"/><circle cx="28" cy="10.500" r="2.200" fill="#8cc8f0"/><circle cx="29.500" cy="12" r="1.600" fill="#f0a020"/><circle cx="30" cy="12.800" r=".8" fill="#e02080"/></svg></div>
<div class="lname" style="top:5px">Layer #3</div>
<div class="lsub" style="top:23.7px">normal 100% | <b>attendent…</b></div>
</div>
<svg class="abs" style="left:1166.700px;top:497.25px;width:11.600px;height:7.400px" viewBox="0 0 11.600 7.400"><path fill="#f2f2f2" d="M5.800 .2C2.900 .2 1 2.100 .1 3.700c.9 1.600 2.800 3.500 5.700 3.500s4.800-1.900 5.700-3.500C10.600 2.100 8.700 .2 5.800 .2z"/><circle cx="5.800" cy="3.700" r="2.100" fill="none" stroke="#222" stroke-width="1"/><circle cx="5.200" cy="3" r=".8" fill="#222"/></svg>
<svg class="abs" style="left:1166px;top:507.95px;width:13px;height:12px" viewBox="0 0 13 12"><path d="M2 .5v8.500h4" fill="none" stroke="#ccc" stroke-width="1.300"/><circle cx="5" cy="3" r="1.300" fill="#ccc"/><ellipse cx="9" cy="8.500" rx="3.300" ry="2.300" fill="none" stroke="#ccc" stroke-width="1"/><circle cx="9" cy="8.500" r="1" fill="#ccc"/></svg>
<svg style="position:absolute;left:1348.07px;top:495.20px;width:2.46px;height:11.50px;fill:#eee;overflow:visible;" viewBox="0 -1536 384 1792"><path transform="scale(1,-1)" d="M384 288v-192q0 -40 -28 -68t-68 -28h-192q-40 0 -68 28t-28 68v192q0 40 28 68t68 28h192q40 0 68 -28t28 -68zM384 800v-192q0 -40 -28 -68t-68 -28h-192q-40 0 -68 28t-28 68v192q0 40 28 68t68 28h192q40 0 68 -28t28 -68zM384 1312v-192q0 -40 -28 -68t-68 -28h-192 q-40 0 -68 28t-28 68v192q0 40 28 68t68 28h192q40 0 68 -28t28 -68z"/></svg>
<div class="lrow" style="top:526.7px;height:35.750px;">
<div class="strip" style=""></div>
<div class="thumbn" style="top:3.3px"><svg width="31.500" height="31.500" viewBox="0 0 31.500 31.500" style="position:absolute;left:0;top:0"><defs></defs><rect x="1" y="7.500" width="29.500" height="16" fill="url(#chk)"/><path d="M1 10c2.500 0 3.500 2 3 4.500L1 15z" fill="#f0a060" opacity=".8"/><path d="M1 20.500c5 1.500 11 1.500 17 0l-.5 2c-5 1.500-11 1.500-16.500 .5z" fill="#f49050"/></svg></div>
<div class="lname" style="top:5px">Layer #1</div>
<div class="lsub" style="top:23.7px">normal 100% | <b>attendent…</b></div>
</div>
<svg class="abs" style="left:1166.700px;top:533.0px;width:11.600px;height:7.400px" viewBox="0 0 11.600 7.400"><path fill="#f2f2f2" d="M5.800 .2C2.900 .2 1 2.100 .1 3.700c.9 1.600 2.800 3.500 5.700 3.500s4.800-1.900 5.700-3.500C10.600 2.100 8.700 .2 5.800 .2z"/><circle cx="5.800" cy="3.700" r="2.100" fill="none" stroke="#222" stroke-width="1"/><circle cx="5.200" cy="3" r=".8" fill="#222"/></svg>
<svg class="abs" style="left:1166px;top:543.7px;width:13px;height:12px" viewBox="0 0 13 12"><path d="M2 .5v8.500h4" fill="none" stroke="#ccc" stroke-width="1.300"/><circle cx="5" cy="3" r="1.300" fill="#ccc"/><ellipse cx="9" cy="8.500" rx="3.300" ry="2.300" fill="none" stroke="#ccc" stroke-width="1"/><circle cx="9" cy="8.500" r="1" fill="#ccc"/></svg>
<svg style="position:absolute;left:1348.07px;top:530.95px;width:2.46px;height:11.50px;fill:#eee;overflow:visible;" viewBox="0 -1536 384 1792"><path transform="scale(1,-1)" d="M384 288v-192q0 -40 -28 -68t-68 -28h-192q-40 0 -68 28t-28 68v192q0 40 28 68t68 28h192q40 0 68 -28t28 -68zM384 800v-192q0 -40 -28 -68t-68 -28h-192q-40 0 -68 28t-28 68v192q0 40 28 68t68 28h192q40 0 68 -28t28 -68zM384 1312v-192q0 -40 -28 -68t-68 -28h-192 q-40 0 -68 28t-28 68v192q0 40 28 68t68 28h192q40 0 68 -28t28 -68z"/></svg>
<div class="lrow" style="top:562.45px;height:35.750px;">
<div class="strip" style=""></div>
<div class="thumbn" style="top:3.3px"><svg width="31.500" height="31.500" viewBox="0 0 31.500 31.500" style="position:absolute;left:0;top:0"><defs></defs><rect x="1" y="4.500" width="29.500" height="23" fill="url(#chk)"/><path d="M1 9.500c3-1.500 5 0 5 2.500 0 2-2 3-3 3.500 1 2 3 3.500 6 2.500 2-1.500 5-1 8 0 3 0 3.500-2 3.500-4 0-3 2-4.500 4-3.500 1.500 1 1.500 3 1 6-.5 3-1.500 6-2.500 8-2 1.500-5 1.500-8 1.500-3-.5-5-.5-8 .5-2 0-4.500-1-6-3z" fill="#6a2a02"/></svg></div>
<div class="lname" style="top:5px">Layer #2</div>
<div class="lsub" style="top:23.7px">normal 100% | <b>attendent…</b></div>
</div>
<svg class="abs" style="left:1166.700px;top:568.75px;width:11.600px;height:7.400px" viewBox="0 0 11.600 7.400"><path fill="#f2f2f2" d="M5.800 .2C2.900 .2 1 2.100 .1 3.700c.9 1.600 2.800 3.500 5.700 3.500s4.800-1.900 5.700-3.500C10.600 2.100 8.700 .2 5.800 .2z"/><circle cx="5.800" cy="3.700" r="2.100" fill="none" stroke="#222" stroke-width="1"/><circle cx="5.200" cy="3" r=".8" fill="#222"/></svg>
<svg class="abs" style="left:1166px;top:579.45px;width:13px;height:12px" viewBox="0 0 13 12"><path d="M2 .5v8.500h4" fill="none" stroke="#ccc" stroke-width="1.300"/><circle cx="5" cy="3" r="1.300" fill="#ccc"/><ellipse cx="9" cy="8.500" rx="3.300" ry="2.300" fill="none" stroke="#ccc" stroke-width="1"/><circle cx="9" cy="8.500" r="1" fill="#ccc"/></svg>
<svg style="position:absolute;left:1348.07px;top:566.70px;width:2.46px;height:11.50px;fill:#eee;overflow:visible;" viewBox="0 -1536 384 1792"><path transform="scale(1,-1)" d="M384 288v-192q0 -40 -28 -68t-68 -28h-192q-40 0 -68 28t-28 68v192q0 40 28 68t68 28h192q40 0 68 -28t28 -68zM384 800v-192q0 -40 -28 -68t-68 -28h-192q-40 0 -68 28t-28 68v192q0 40 28 68t68 28h192q40 0 68 -28t28 -68zM384 1312v-192q0 -40 -28 -68t-68 -28h-192 q-40 0 -68 28t-28 68v192q0 40 28 68t68 28h192q40 0 68 -28t28 -68z"/></svg>
<div class="abs" style="left:1360px;top:455px;width:3px;height:143px;background:#4a4a4a"></div>
</div></div>
</body></html>
